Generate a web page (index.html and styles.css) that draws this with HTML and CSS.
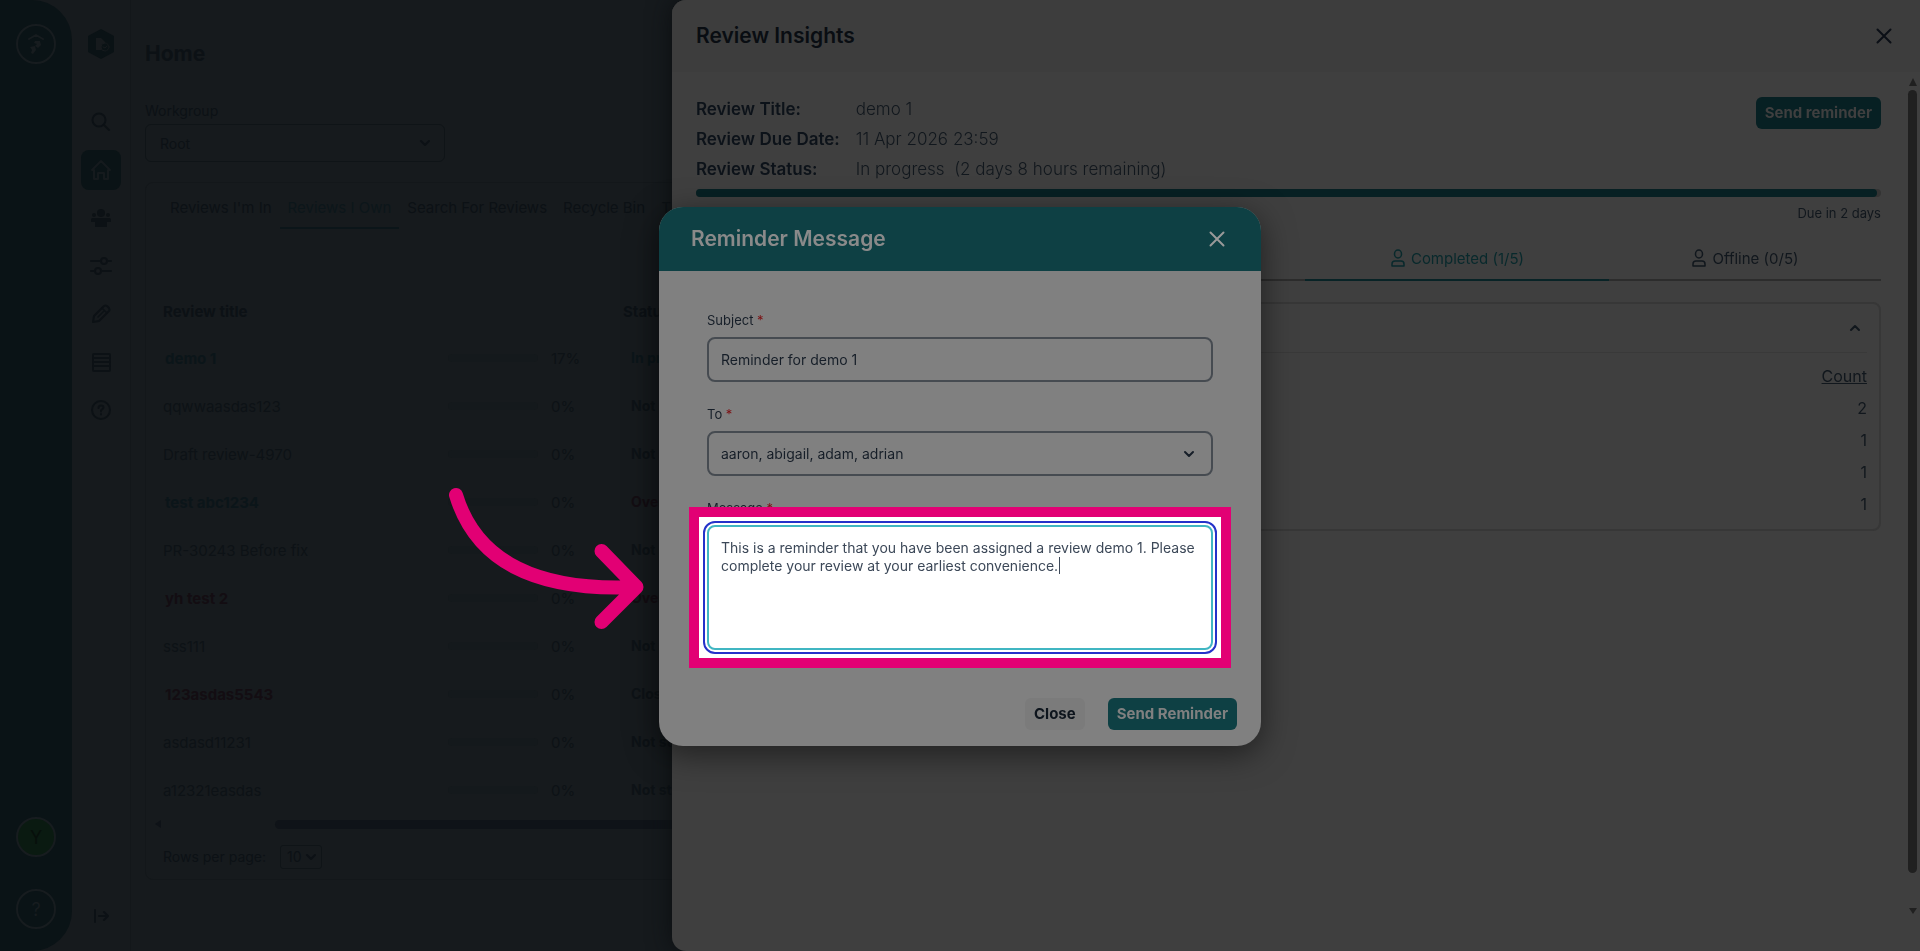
FILE: index.html
```html
<!DOCTYPE html>
<html lang="en">
<head>
<meta charset="utf-8">
<title>Review Insights</title>
<link rel="stylesheet" href="styles.css">
</head>
<body>
<div class="app">
  <aside class="rail">
    <button class="rail-btn" aria-label="Workspace"><svg width="20" height="22" viewBox="0 0 20 22"><path d="M3 6l7-4 7 4" fill="none" stroke="currentColor"/><path d="M9 8h5l1 4-3 3-3-2 2-2-3-1z"/><path d="M4 14l5-1 1 4-3 4-2-1 1-3z"/></svg></button>
    <span class="grow"></span>
    <button class="rail-btn user">Y</button>
    <button class="rail-btn help">?</button>
  </aside>
  <nav class="side">
    <a class="brand" href="#" aria-label="Reviews"><svg width="28" height="32" viewBox="0 0 28 32"><path d="M14 1 27 8v16L14 31 1 24V8z" fill="#0a1215" stroke="none"/><path d="M9 10h5l4 4v2l-3 3v3H9z" fill="#161a1d" stroke="none"/><circle cx="18" cy="19" r="4" fill="#0a1215" stroke="#161a1d" stroke-width="1"/><path d="M16 19l2 1 2-2" stroke="#161a1d" stroke-width="1"/></svg></a>
    <a class="nav" href="#" aria-label="Search"><svg width="22" height="22" viewBox="0 0 22 22"><circle cx="9" cy="9" r="6.500"/><path d="M14 14l5 5"/></svg></a>
    <a class="nav on" href="#" aria-label="Home"><svg width="22" height="22" viewBox="0 0 22 22"><path d="M2 11 11 2l9 9h-2v9h-4v-6H8v6H4v-9z"/></svg></a>
    <a class="nav" href="#" aria-label="People"><svg width="22" height="22" viewBox="0 0 22 22" class="solid"><circle cx="11" cy="6" r="4"/><circle cx="4" cy="8" r="2"/><circle cx="18" cy="8" r="2"/><path d="M1 15v-3l1-1h18l1 1v3h-4v5H5v-5z"/></svg></a>
    <a class="nav" href="#" aria-label="Settings"><svg width="22" height="22" viewBox="0 0 22 22"><circle cx="14" cy="6" r="3"/><circle cx="8" cy="16" r="3"/><path d="M1 6h10M17 6h4M1 16h4M11 16h10"/></svg></a>
    <a class="nav" href="#" aria-label="Edit"><svg width="22" height="22" viewBox="0 0 22 22"><path d="M3 19l1-6L14 3q1.500-1 3 0l2 2q1 1.500 0 3L9 18z"/><path d="M12 5l5 5M8 14l6-6" stroke-width="1.500"/></svg></a>
    <a class="nav" href="#" aria-label="List"><svg width="22" height="22" viewBox="0 0 22 22"><rect x="3" y="3" width="17" height="17" rx="1"/><path d="M3 7h17M3 11h17M3 15h17"/></svg></a>
    <a class="nav" href="#" aria-label="Help"><svg width="22" height="22" viewBox="0 0 22 22"><circle cx="11" cy="11" r="9"/><path d="M8.500 9q0-2.500 2.500-2.500t2.500 2q0 1.200-1.500 2t-1 2M11 15v.5"/></svg></a>
    <span class="grow"></span>
    <a class="nav out" href="#" aria-label="Expand"><svg width="18" height="18" viewBox="0 0 18 18"><path d="M3 3v12M7 9h9M12 5l4 4-4 4"/></svg></a>
  </nav>
  <main class="main">
    <h1>Home</h1>
    <label class="wg-label" for="wg">Workgroup</label>
    <div class="pick wg"><select id="wg"><option>Root</option></select><svg width="12" height="12" viewBox="0 0 12 12"><path d="M2 4l4 4 4-4"/></svg></div>
    <section class="card">
      <div class="tabs"><button>Reviews I'm In</button><button class="on">Reviews I Own</button><button>Search For Reviews</button><button>Recycle Bin</button><button>T</button></div>
      <table class="list">
        <thead><tr><th class="c1">Review title</th><th class="c2"></th><th class="c3"></th><th>Status</th></tr></thead>
        <tbody>
          <tr><td><b class="name go">demo 1</b></td><td><i class="bar"></i></td><td>17%</td><td><b class="chip go">In progress</b></td></tr>
          <tr><td>qqwwaasdas123</td><td><i class="bar"></i></td><td>0%</td><td><b class="chip">Not started</b></td></tr>
          <tr><td>Draft review-4970</td><td><i class="bar"></i></td><td>0%</td><td><b class="chip">Not started</b></td></tr>
          <tr><td><b class="name go">test abc1234</b></td><td><i class="bar"></i></td><td>0%</td><td><b class="chip late">Overdue</b></td></tr>
          <tr><td>PR-30243 Before fix</td><td><i class="bar"></i></td><td>0%</td><td><b class="chip">Not started</b></td></tr>
          <tr><td><b class="name late">yh test 2</b></td><td><i class="bar"></i></td><td>0%</td><td><b class="chip late">Overdue</b></td></tr>
          <tr><td>sss111</td><td><i class="bar"></i></td><td>0%</td><td><b class="chip">Not started</b></td></tr>
          <tr><td><b class="name late">123asdas5543</b></td><td><i class="bar"></i></td><td>0%</td><td><b class="chip">Closed</b></td></tr>
          <tr><td>asdasd11231</td><td><i class="bar"></i></td><td>0%</td><td><b class="chip">Not started</b></td></tr>
          <tr><td>a12321easdas</td><td><i class="bar"></i></td><td>0%</td><td><b class="chip">Not started</b></td></tr>
        </tbody>
      </table>
      <div class="hscroll"><svg width="6" height="10" viewBox="0 0 6 10"><path d="M6 1v8L0 5z"/></svg><span></span></div>
      <div class="pager"><label for="rows">Rows per page:</label><div class="pick small"><select id="rows"><option>10</option></select><svg width="12" height="12" viewBox="0 0 12 12"><path d="M2 4l4 4 4-4"/></svg></div></div>
    </section>
  </main>
</div>

<aside class="drawer">
  <header class="drawer-head"><h2>Review Insights</h2><button class="x" aria-label="Close panel"><svg width="16" height="16" viewBox="0 0 16 16"><path d="M1.500 1.500l13 13M14.500 1.500l-13 13"/></svg></button></header>
  <div class="drawer-wrap">
    <div class="drawer-body">
      <div class="top">
        <dl><dt>Review Title:</dt><dd>demo 1</dd><dt>Review Due Date:</dt><dd>11 Apr 2026 23:59</dd><dt>Review Status:</dt><dd>In progress &nbsp;(2 days 8 hours remaining)</dd></dl>
        <button class="btn dim">Send reminder</button>
      </div>
      <div class="meter"><span></span></div>
      <p class="due">Due in 2 days</p>
      <div class="dtabs">
        <span class="rest"></span>
        <button class="on"><svg width="16" height="18" viewBox="0 0 16 18"><ellipse cx="8" cy="5" rx="3.500" ry="4"/><path d="M2 17v-2q0-3 3-3h6q3 0 3 3v2z"/></svg>Completed (1/5)</button>
        <button class="last"><svg width="16" height="18" viewBox="0 0 16 18"><ellipse cx="8" cy="5" rx="3.500" ry="4"/><path d="M2 17v-2q0-3 3-3h6q3 0 3 3v2z"/></svg>Offline (0/5)</button>
      </div>
      <section class="panel">
        <button class="fold" aria-label="Collapse"><svg width="12" height="12" viewBox="0 0 12 12"><path d="M2 8l4-4 4 4"/></svg></button>
        <table class="counts"><thead><tr><th>Count</th></tr></thead><tbody><tr><td>2</td></tr><tr><td>1</td></tr><tr><td>1</td></tr><tr><td>1</td></tr></tbody></table>
      </section>
    </div>
    <div class="vscroll"><svg width="8" height="8" viewBox="0 0 8 8"><path d="M4 0l4 8H0z"/></svg><span></span><svg width="8" height="6" viewBox="0 0 8 6"><path d="M0 0h8L4 6z"/></svg></div>
  </div>
</aside>

<div class="layer">
  <form class="modal">
    <header class="modal-head"><h2>Reminder Message</h2><button type="button" class="x" aria-label="Close dialog"><svg width="16" height="16" viewBox="0 0 16 16"><path d="M1.500 1.500l13 13M14.500 1.500l-13 13"/></svg></button></header>
    <div class="fields">
      <label for="subject">Subject <em>*</em></label>
      <input id="subject" type="text" value="Reminder for demo 1">
      <label for="to">To <em>*</em></label>
      <div class="pick to"><select id="to"><option>aaron, abigail, adam, adrian</option></select><svg width="12" height="12" viewBox="0 0 12 12"><path d="M2 4l4 4 4-4"/></svg></div>
      <label for="msg">Message <em>*</em></label>
      <div class="spot"><textarea id="msg">This is a reminder that you have been assigned a review demo 1. Please complete your review at your earliest convenience.</textarea><i class="caret"></i></div>
    </div>
    <footer class="foot"><button type="button" class="btn plain">Close</button><button type="button" class="btn">Send Reminder</button></footer>
    <svg class="arrow" width="200" height="150" viewBox="0 0 200 150"><path d="M10 12C29 75 85 109 190 104M155.500 68L190.500 104L155.500 139"/></svg>
  </form>
</div>
</body>
</html>
```
FILE: styles.css
```css
* { box-sizing: border-box; }
body { margin: 0; height: 100vh; overflow: hidden; background: #161a1d; color: #0c1115; font-family: Inter, "Liberation Sans", sans-serif; font-size: 15px; }
h1, h2, p, dl, dd { margin: 0; }
button, input, select, textarea { font: inherit; color: inherit; background: none; border: 0; margin: 0; padding: 0; }
svg { display: block; flex: none; fill: none; stroke: currentColor; stroke-width: 2; stroke-linecap: round; stroke-linejoin: round; }
table { border-collapse: collapse; }
.grow { flex: 1; }

.app { display: flex; height: 100%; }
.rail { width: 72px; flex: none; display: flex; flex-direction: column; align-items: center; gap: 32px; padding: 24px 0 22px; background: #0a1316; border-radius: 0 40px 40px 0; }
.rail-btn { width: 40px; height: 40px; display: grid; place-items: center; border: 2px solid #171c1f; border-radius: 50%; color: #171c1f; font-size: 18px; }
.rail-btn svg { stroke: none; fill: currentColor; }
.rail-btn.user { background: #0a1a11; color: #070f0b; }
.side { width: 58px; flex: none; margin-left: 1px; display: flex; flex-direction: column; align-items: center; gap: 8px; padding: 28px 2px 15px 0; border-right: 1px solid #13171a; }
.side a { color: #0c1115; }
.brand { margin-bottom: 34px; }
.nav { width: 40px; height: 40px; display: grid; place-items: center; border-radius: 8px; }
.nav.on { background: #0a1316; }
.side .nav.on { color: #151a1d; }
.solid { fill: currentColor; stroke: none; }
.main { flex: 1; min-width: 0; padding: 39px 0 0 14px; }
h1 { font-size: 21px; line-height: 30px; }
.wg-label { display: block; margin-top: 32px; height: 23px; font-size: 14px; line-height: 20px; }
.pick { position: relative; }
.pick select { appearance: none; width: 100%; height: 100%; border-radius: 6px; }
.pick svg { position: absolute; right: 14px; top: 50%; margin-top: -6px; pointer-events: none; }
.wg { width: 300px; height: 38px; font-size: 14px; }
.wg select { border: 1px solid #0f1417; padding: 0 14px; }
.card { margin-top: 20px; border: 1px solid #13171a; border-radius: 8px 0 0 8px; }
.tabs { display: flex; white-space: nowrap; height: 46px; padding-left: 16px; overflow: hidden; }
.tabs button { padding: 4px 8px 0; border-bottom: 2px solid transparent; }
.tabs .on { color: #0c161a; border-color: #0b1519; }
.list { table-layout: fixed; width: 100%; margin-top: 59px; margin-left: 17px; text-align: left; white-space: nowrap; }
.list th { height: 46px; padding: 0; font-size: 15px; }
.list td { height: 48px; padding: 0; overflow: hidden; }
.list tbody { color: #0d1216; }
.c1 { width: 285px; }
.c2 { width: 103px; }
.c3 { width: 72px; }
.name { padding-left: 2px; }
.go { color: #0b1519; }
.late { color: #130d12; }
.bar { display: block; width: 90px; height: 8px; border-radius: 4px; background: #14191c; }
.chip { display: inline-block; padding: 0 8px; font-size: 14px; line-height: 20px; }
.hscroll { display: flex; align-items: center; gap: 114px; height: 20px; padding-left: 9px; }
.hscroll svg, .vscroll svg { stroke: none; fill: #0e1217; }
.hscroll span { flex: 1; height: 9px; border-radius: 5px 0 0 5px; background: #0f1318; }
.pager { display: flex; align-items: center; gap: 14px; height: 45px; padding-left: 17px; font-size: 14px; }
.small { width: 42px; height: 24px; }
.small select { border: 1px solid #0f1417; border-radius: 3px; padding-left: 6px; }
.small svg { right: 5px; }

.drawer { position: fixed; inset: 0 0 0 auto; width: 65%; display: flex; flex-direction: column; background: #3f3f3f; border-radius: 14px 0 0 14px; overflow: hidden; box-shadow: 0 0 24px #0b0e10; }
.drawer-head { display: flex; align-items: center; justify-content: space-between; height: 72px; padding: 0 28px 0 24px; background: #3d3d3d; color: #090d12; }
h2 { font-size: 21px; line-height: 28px; font-weight: 600; }
.x { color: #0b0f16; }
.drawer-wrap { flex: 1; display: flex; min-height: 0; }
.drawer-body { flex: 1; padding: 22px 27px 0 24px; color: #11171d; }
.top { display: flex; justify-content: space-between; align-items: flex-start; font-size: 17px; line-height: 30px; }
dl { display: grid; grid-template-columns: auto auto; column-gap: 16px; }
dt { font-weight: 600; color: #0c1219; }
dd { font-weight: 300; }
.btn { height: 32px; padding: 0 9px; border-radius: 6px; background: #0e4044; color: #808080; font-size: 15px; line-height: 20px; font-weight: 700; }
.btn.dim { margin-top: 3px; background: #072023; color: #3f3f3f; }
.meter { height: 8px; margin-top: 5px; border-radius: 4px; background: #333; }
.meter span { display: block; width: 99.700%; height: 100%; border-radius: 4px; background: #072023; }
.due { margin-top: 6px; text-align: right; font-size: 13px; line-height: 20px; }
.dtabs { display: flex; height: 46px; margin-top: 12px; }
.dtabs > * { border-bottom: 2px solid #2c2c2c; }
.rest { flex: 609; }
.dtabs button { flex: 304; display: flex; align-items: center; justify-content: center; gap: 5px; padding-top: 2px; font-size: 15px; }
.dtabs .last { flex: 272; }
.dtabs svg { stroke-width: 1.500; }
.dtabs .on { color: #08292c; border-color: #082326; }
.panel { margin-top: 21px; border: 2px solid #373737; border-radius: 8px; padding: 0 12px 9px; }
.fold { width: 100%; height: 49px; padding-right: 6px; display: flex; align-items: center; justify-content: flex-end; border-bottom: 1px solid #393939; }
.counts { width: 100%; margin-top: 7px; text-align: right; font-size: 16px; }
.counts th, .counts td { height: 32px; padding: 0; font-weight: 400; }
.counts th { text-decoration: underline; }
.vscroll { width: 12px; display: flex; flex-direction: column; align-items: center; padding: 6px 3px 37px 0; gap: 4px; }
.vscroll span { flex: 1; width: 9px; border-radius: 5px; background: #202020; margin-bottom: 31px; }
.vscroll svg { fill: #202020; }

.layer { position: fixed; inset: 0; display: grid; place-items: center; padding-top: 2px; }
.modal { position: relative; width: 602px; background: #808080; border-radius: 24px; box-shadow: 0 8px 32px rgba(0, 0, 0, .5); color: #161e28; }
.modal-head { display: flex; align-items: center; justify-content: space-between; height: 64px; padding: 0 36px 0 32px; background: #0e4044; border-radius: 24px 24px 0 0; color: #8a8a8a; }
.modal-head .x { color: #999; }
.fields { padding: 39px 48px 0; font-size: 14px; }
.fields label { display: block; height: 27px; font-size: 13px; line-height: 20px; }
.fields em { color: #7c1013; font-style: normal; }
.fields input, .to { display: block; width: 100%; height: 45px; margin-bottom: 22px; }
.fields input, .to select { border: 2px solid #464b51; border-radius: 8px; padding: 0 12px; }
.to svg { right: 18px; }
.spot { position: relative; }
.spot::before { content: ""; position: absolute; inset: -18px; background: #fff; border: 10px solid #e20074; }
.spot textarea { position: relative; display: block; width: 100%; height: 125px; padding: 12px; resize: none; line-height: 18px; background: #fff; color: #3c4858; border: 2px solid #40b6c2; border-radius: 8px; outline: 2px solid #2432c9; outline-offset: 2px; }
.caret { position: absolute; left: 352px; top: 32px; width: 1px; height: 17px; background: #3c4858; }
.foot { display: flex; justify-content: flex-end; gap: 23px; padding: 48px 24px 16px; }
.btn.plain { background: #7b7b7b; color: #0e151d; }
.arrow { position: absolute; left: -213px; top: 276px; stroke: #e20074; stroke-width: 14; }
```
